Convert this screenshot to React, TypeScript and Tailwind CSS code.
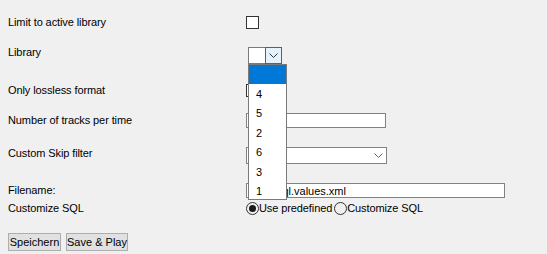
import React from "react";

const Chevron = ({ color = "#444" }: { color?: string }) => (
  <svg width="9" height="5" viewBox="0 0 9 5" className="block">
    <path d="M0.5 0.5 L4.5 4.5 L8.5 0.5" fill="none" stroke={color} strokeWidth="1" />
  </svg>
);

const Checkbox = () => (
  <div className="w-[13px] h-[13px] border border-[#333333] bg-white" />
);

const Radio = ({ checked }: { checked?: boolean }) => (
  <div className="w-[13px] h-[13px] rounded-full border border-[#333333] flex items-center justify-center bg-[#f0f0f0]">
    {checked && <div className="w-[7px] h-[7px] rounded-full bg-[#1a1a1a]" />}
  </div>
);

export default function App() {
  const items = ["", "4", "5", "2", "6", "3", "1"];
  return (
    <div
      className="relative w-[547px] h-[254px] bg-[#f0f0f0] text-black text-[11px] leading-[14px] tracking-[-0.1px] overflow-hidden"
      style={{ fontFamily: '"Liberation Sans", Arial, sans-serif' }}
    >
      <div className="flex flex-col pl-2">
        {/* Row 1 */}
        <div className="flex h-[36px] items-start">
          <div className="w-[238px] mt-[15px]">Limit to active library</div>
          <div className="mt-[16px]">
            <Checkbox />
          </div>
        </div>
        {/* Row 2 */}
        <div className="flex h-[40px] items-start">
          <div className="w-[238px] mt-[9px]">Library</div>
          <div className="mt-[11px] ml-[2px] flex h-[17px]">
            <div className="w-[17px] h-[17px] bg-white border border-[#7a7a7a] border-r-0" />
            <div className="w-[17px] h-[17px] bg-[#e5f1fb] border border-[#0078d7] flex items-center justify-center">
              <Chevron color="#333" />
            </div>
          </div>
        </div>
        {/* Row 3 */}
        <div className="flex h-[30px] items-start">
          <div className="w-[238px] mt-[7px]">Only lossless format</div>
          <div className="mt-[8px]">
            <Checkbox />
          </div>
        </div>
        {/* Row 4 */}
        <div className="flex h-[33px] items-start">
          <div className="w-[238px] mt-[7px]">Number of tracks per time</div>
          <div className="mt-[7px] w-[140px] h-[15px] bg-white border border-[#828282]" />
        </div>
        {/* Row 5 */}
        <div className="flex h-[37px] items-start">
          <div className="w-[238px] mt-[7px]">Custom Skip filter</div>
          <div className="mt-[8px] w-[141px] h-[17px] bg-white border border-[#828282] flex items-center justify-end pr-[3px]">
            <Chevron color="#666" />
          </div>
        </div>
        {/* Row 6 */}
        <div className="flex h-[22px] items-start">
          <div className="w-[238px] mt-[7px]">Filename:</div>
          <div className="mt-[7px] w-[259px] h-[15px] bg-white border border-[#828282] pl-[3px] flex items-center tracking-normal">
            filter_sql.values.xml
          </div>
        </div>
        {/* Row 7 */}
        <div className="flex h-[22px] items-start">
          <div className="w-[238px] mt-[3px]">Customize SQL</div>
          <div className="mt-[3px] flex items-center">
            <Radio checked />
            <span>Use predefined</span>
            <div className="ml-[2px]">
              <Radio />
            </div>
            <span>Customize SQL</span>
          </div>
        </div>
        {/* Buttons */}
        <div className="flex gap-[5px] mt-[13px]">
          <button className="h-[18px] w-[53px] bg-[#e1e1e1] border border-[#adadad] flex items-center justify-center tracking-normal">
            Speichern
          </button>
          <button className="h-[18px] w-[62px] bg-[#e1e1e1] border border-[#adadad] flex items-center justify-center tracking-normal">
            Save &amp; Play
          </button>
        </div>
      </div>

      {/* Open dropdown list */}
      <div className="absolute left-[248px] top-[64px] w-[39px] h-[136px] bg-white border border-[#7a7a7a] flex flex-col overflow-hidden">
        {items.map((it, i) => (
          <div
            key={i}
            className={
              i === 0
                ? "h-[19px] shrink-0 bg-[#0078d7] text-white pl-[7px] flex items-center"
                : "h-[19.5px] shrink-0 pl-[7px] flex items-center"
            }
          >
            {it}
          </div>
        ))}
      </div>
    </div>
  );
}
